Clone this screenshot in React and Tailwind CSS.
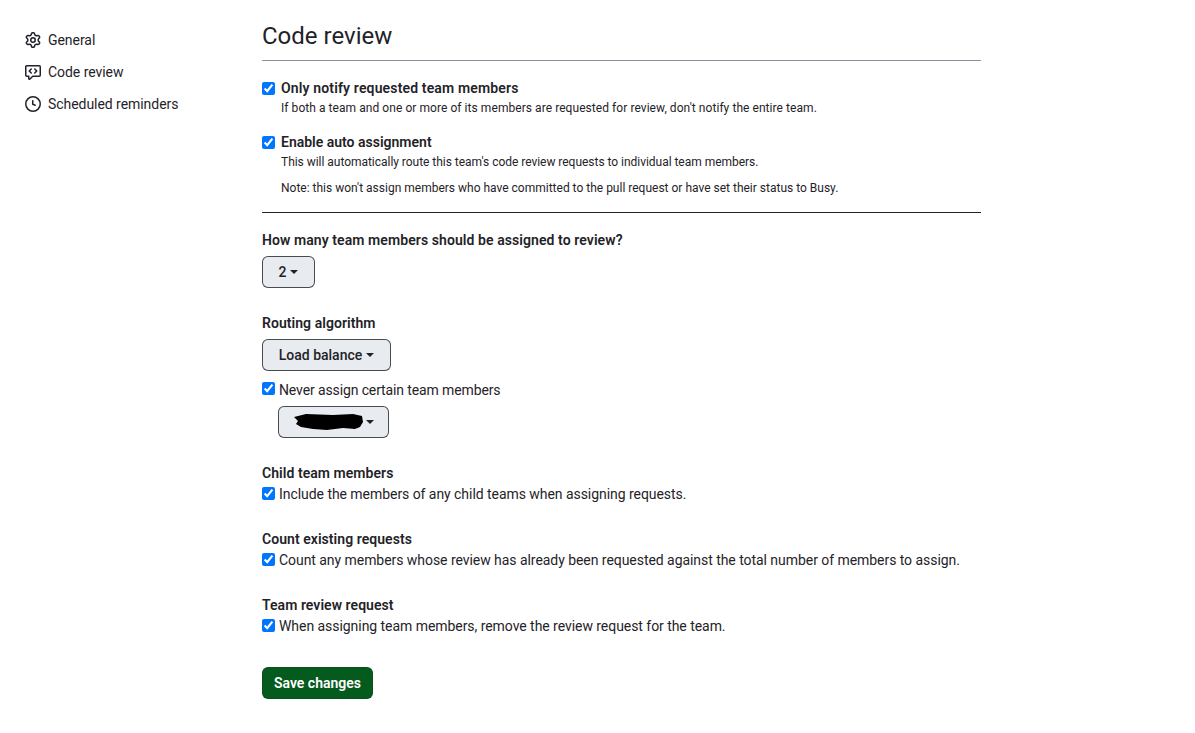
function Caret() {
  return <span className="ml-1 inline-block h-0 w-0 border-x-[4px] border-t-[4px] border-x-transparent border-t-[#1f2328] align-middle" />;
}
function Check({ className = "" }) {
  return <input type="checkbox" defaultChecked className={`m-0 h-[13px] w-[13px] shrink-0 accent-[#0075ff] ${className}`} />;
}
function Drop({ children, className = "" }) {
  return (
    <button className={`flex h-8 items-center justify-center rounded-md border border-[#1f2328]/80 bg-[#e8ecf0] text-sm font-medium text-[#1f2328] ${className}`}>
      {children}
    </button>
  );
}
function Field({ title, text, className = "" }) {
  return (
    <div className={className}>
      <div className="h-[21px] text-sm leading-[21px] font-semibold tracking-[0.05px] text-[#1f2328]">{title}</div>
      <label className="flex h-[21px] items-center gap-[4px] text-sm tracking-[-0.05px] text-[#1f2328]">
        <Check className="relative -top-[1px]" />
        <span className="-mt-[2px] whitespace-nowrap">{text}</span>
      </label>
    </div>
  );
}
export default function App() {
  return (
    <div className="flex min-h-[733px] bg-white font-['Roboto','Open_Sans',sans-serif] text-[#1f2328]">
      <nav className="w-[262px] shrink-0 pt-6 pl-[25px]">
        {[
          ["General", <svg key="g" width="16" height="16" viewBox="0 0 16 16" fill="currentColor"><path d="M8 0a8.2 8.2 0 0 1 .701.031C9.444.095 9.99.645 10.16 1.29l.288 1.107c.018.066.079.158.212.224.231.114.454.243.668.386.123.082.233.09.299.071l1.103-.303c.644-.176 1.392.021 1.82.63.27.385.506.792.704 1.218.315.675.111 1.422-.364 1.891l-.814.806c-.049.048-.098.147-.088.294.016.257.016.515 0 .772-.01.147.038.246.088.294l.814.806c.475.469.679 1.216.364 1.891a7.977 7.977 0 0 1-.704 1.217c-.428.61-1.176.807-1.82.63l-1.102-.302c-.067-.019-.177-.011-.3.071a5.909 5.909 0 0 1-.668.386c-.133.066-.194.158-.211.224l-.29 1.106c-.168.646-.715 1.196-1.458 1.26a8.006 8.006 0 0 1-1.402 0c-.743-.064-1.289-.614-1.458-1.26l-.289-1.106c-.018-.066-.079-.158-.212-.224a5.738 5.738 0 0 1-.668-.386c-.123-.082-.233-.09-.299-.071l-1.103.303c-.644.176-1.392-.021-1.82-.63a8.12 8.12 0 0 1-.704-1.218c-.315-.675-.111-1.422.363-1.891l.815-.806c.05-.048.098-.147.088-.294a6.214 6.214 0 0 1 0-.772c.01-.147-.038-.246-.088-.294l-.815-.806C.635 6.045.431 5.298.746 4.623a7.92 7.92 0 0 1 .704-1.217c.428-.61 1.176-.807 1.82-.63l1.102.302c.067.019.177.011.3-.071.214-.143.437-.272.668-.386.133-.066.194-.158.211-.224l.29-1.106C6.009.645 6.556.095 7.299.03 7.53.01 7.764 0 8 0Zm-.571 1.525c-.036.003-.108.036-.137.146l-.289 1.105c-.147.561-.549.967-.998 1.189-.173.086-.34.183-.5.29-.417.278-.97.423-1.529.27l-1.103-.303c-.109-.03-.175.016-.195.045-.22.312-.412.644-.573.99-.014.031-.021.11.059.19l.815.806c.411.406.562.957.53 1.456a4.709 4.709 0 0 0 0 .582c.032.499-.119 1.05-.53 1.456l-.815.806c-.081.08-.073.159-.059.19.162.346.353.677.573.989.02.03.085.076.195.046l1.102-.303c.56-.153 1.113-.008 1.53.27.161.107.328.204.501.29.447.222.85.629.997 1.189l.289 1.105c.029.109.101.143.137.146a6.6 6.6 0 0 0 1.142 0c.036-.003.108-.036.137-.146l.289-1.105c.147-.561.549-.967.998-1.189.173-.086.34-.183.5-.29.417-.278.97-.423 1.529-.27l1.103.303c.109.029.175-.016.195-.045.22-.313.411-.644.573-.99.014-.031.021-.11-.059-.19l-.815-.806c-.411-.406-.562-.957-.53-1.456a4.709 4.709 0 0 0 0-.582c-.032-.499.119-1.05.53-1.456l.815-.806c.081-.08.073-.159.059-.19a6.464 6.464 0 0 0-.573-.989c-.02-.03-.085-.076-.195-.046l-1.102.303c-.56.153-1.113.008-1.53-.27a4.44 4.44 0 0 0-.501-.29c-.447-.222-.85-.629-.997-1.189l-.289-1.105c-.029-.11-.101-.143-.137-.146a6.6 6.6 0 0 0-1.142 0ZM11 8a3 3 0 1 1-6 0 3 3 0 0 1 6 0ZM9.5 8a1.5 1.5 0 1 0-3.001.001A1.5 1.5 0 0 0 9.5 8Z"/></svg>],
          ["Code review", <svg key="c" width="16" height="16" viewBox="0 0 16 16" fill="currentColor"><path d="M1.75 1h12.5c.966 0 1.75.784 1.75 1.75v8.5A1.75 1.75 0 0 1 14.25 13H8.061l-2.574 2.573A1.458 1.458 0 0 1 3 14.543V13H1.75A1.75 1.75 0 0 1 0 11.25v-8.5C0 1.784.784 1 1.75 1ZM1.5 2.75v8.5c0 .138.112.25.25.25h2a.75.75 0 0 1 .75.75v2.19l2.72-2.72a.749.749 0 0 1 .53-.22h6.5a.25.25 0 0 0 .25-.25v-8.5a.25.25 0 0 0-.25-.25H1.75a.25.25 0 0 0-.25.25Zm5.28 1.72a.75.75 0 0 1 0 1.06L5.31 7l1.47 1.47a.751.751 0 0 1-.018 1.042.751.751 0 0 1-1.042.018l-2-2a.75.75 0 0 1 0-1.06l2-2a.75.75 0 0 1 1.06 0Zm2.44 0a.75.75 0 0 1 1.06 0l2 2a.75.75 0 0 1 0 1.06l-2 2a.751.751 0 0 1-1.042-.018.751.751 0 0 1-.018-1.042L10.69 7 9.22 5.53a.75.75 0 0 1 0-1.06Z"/></svg>],
          ["Scheduled reminders", <svg key="s" width="16" height="16" viewBox="0 0 16 16" fill="currentColor"><path d="M8 0a8 8 0 1 1 0 16A8 8 0 0 1 8 0ZM1.5 8a6.5 6.5 0 1 0 13 0 6.5 6.5 0 0 0-13 0Zm7-3.25v2.992l2.028.812a.75.75 0 0 1-.557 1.392l-2.5-1A.751.751 0 0 1 7 8.25v-3.5a.75.75 0 0 1 1.5 0Z"/></svg>],
        ].map(([t, icon]) => (
          <div key={t} className="flex h-8 items-center gap-[7px] text-sm tracking-[-0.05px]">
            {icon}
            <span>{t}</span>
          </div>
        ))}
      </nav>
      <main className="w-[719px]">
        <h2 className="flex h-[61px] items-center border-b border-[#8b949e] pt-[12px] text-2xl font-normal">Code review</h2>
        <div className="mt-[17px] flex gap-[6px]">
          <Check className="mt-[4px]" />
          <div>
            <div className="text-sm leading-[21px] font-semibold tracking-[0.15px]">Only notify requested team members</div>
            <p className="text-xs leading-[18px] tracking-[0.06px]">If both a team and one or more of its members are requested for review, don't notify the entire team.</p>
          </div>
        </div>
        <div className="mt-[15px] flex gap-[6px]">
          <Check className="mt-[4px]" />
          <div>
            <div className="text-sm leading-[21px] font-semibold">Enable auto assignment</div>
            <p className="text-xs leading-[18px] tracking-[-0.03px]">This will automatically route this team's code review requests to individual team members.</p>
            <p className="mt-2 text-xs leading-[18px]">Note: this won't assign members who have committed to the pull request or have set their status to Busy.</p>
          </div>
        </div>
        <div className="mt-[15px] border-t border-[#1f2328]" />
        <div className="mt-[17px] h-[21px] text-sm leading-[21px] font-semibold tracking-[0.08px]">How many team members should be assigned to review?</div>
        <Drop className="mt-[5px] w-[53px]">2<Caret /></Drop>
        <div className="mt-[25px] h-[21px] text-sm leading-[21px] font-semibold tracking-[0.05px]">Routing algorithm</div>
        <Drop className="mt-[5px] w-[129px]">Load balance<Caret /></Drop>
        <label className="mt-[8px] flex h-[21px] items-center gap-[4px] text-sm tracking-[-0.12px]">
          <Check className="relative -top-[1px]" />
          <span>Never assign certain team members</span>
        </label>
        <Drop className="mt-[6px] ml-4 w-[111px] !justify-start pl-[14px]">
          <svg width="72" height="20" viewBox="0 0 72 20" className="-mr-[3px]">
            <path d="M1 5 L13 2 L40 3 L60 2 L69 4 L70 10 L67 15 L62 17 L50 16 L34 18 L20 17 L8 15 L3 12 L5 9 Z" fill="#000" />
          </svg>
          <Caret />
        </Drop>
        <Field className="mt-[25px]" title="Child team members" text="Include the members of any child teams when assigning requests." />
        <Field className="mt-[24px]" title="Count existing requests" text="Count any members whose review has already been requested against the total number of members to assign." />
        <Field className="mt-[24px]" title="Team review request" text="When assigning team members, remove the review request for the team." />
        <button className="mt-[30px] h-8 w-[111px] rounded-md border border-[#1f2328]/20 bg-[#055a1e] text-sm font-semibold text-white">Save changes</button>
      </main>
    </div>
  );
}
